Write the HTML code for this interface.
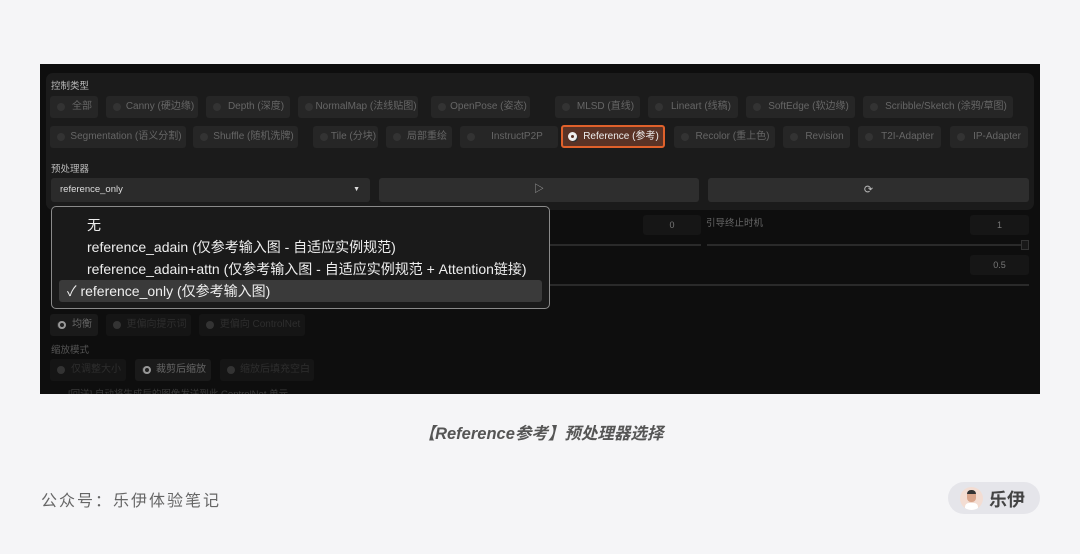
<!DOCTYPE html><html><head><meta charset="utf-8"><style>
*{margin:0;padding:0;box-sizing:border-box}
body{width:1080px;height:554px;background:#f5f5f7;position:relative;overflow:hidden;font-family:"Liberation Sans","Noto Sans CJK SC",sans-serif}
.a{position:absolute}
.shot{left:40px;top:64px;width:1000px;height:330px;background:#0e0e0e;overflow:hidden}
.panel{left:6px;top:9px;width:988px;height:137px;background:#1b1b1b;border-radius:7px}
.b{position:absolute;height:22px;background:#262626;border-radius:3px;color:#666;font-size:10px;line-height:22px;padding-left:16px;text-align:center;white-space:nowrap}
.b:before{content:"";position:absolute;left:7px;top:7px;width:8px;height:8px;border-radius:50%;background:#333}
.lbl{color:#bbb;font-size:9.5px}
.bx{position:absolute;background:#161616;color:#777;font-size:9px;text-align:center;line-height:20px;height:20px;border-radius:3px}
.ln{position:absolute;height:2px;background:#2a2a2a}
.m{position:absolute;left:35px;color:#eee;font-size:14px;white-space:nowrap}
</style></head><body>
<div class="a shot">
<div class="a panel"></div>
<div class="a lbl" style="left:11px;top:14px">控制类型</div>
<div class="b" style="left:10px;top:32px;width:48px">全部</div>
<div class="b" style="left:66px;top:32px;width:92px">Canny (硬边缘)</div>
<div class="b" style="left:166px;top:32px;width:84px">Depth (深度)</div>
<div class="b" style="left:258px;top:32px;width:120px">NormalMap (法线贴图)</div>
<div class="b" style="left:391px;top:32px;width:99px">OpenPose (姿态)</div>
<div class="b" style="left:515px;top:32px;width:85px">MLSD (直线)</div>
<div class="b" style="left:608px;top:32px;width:90px">Lineart (线稿)</div>
<div class="b" style="left:706px;top:32px;width:109px">SoftEdge (软边缘)</div>
<div class="b" style="left:823px;top:32px;width:150px">Scribble/Sketch (涂鸦/草图)</div>
<div class="b" style="left:10px;top:62px;width:136px">Segmentation (语义分割)</div>
<div class="b" style="left:153px;top:62px;width:105px">Shuffle (随机洗牌)</div>
<div class="b" style="left:273px;top:62px;width:65px">Tile (分块)</div>
<div class="b" style="left:346px;top:62px;width:66px">局部重绘</div>
<div class="b" style="left:420px;top:62px;width:98px">InstructP2P</div>
<div class="b" style="left:521px;top:61px;width:104px;height:23px;background:#5a3326;border:2px solid #e0612b;color:#eee;line-height:19px"><span style="position:absolute;left:5px;top:5px;width:9px;height:9px;border-radius:50%;background:#eee;border:2.5px solid #eee"></span><span style="position:absolute;left:8px;top:8px;width:3px;height:3px;border-radius:50%;background:#5a3326"></span><span>Reference (参考)</span></div>
<div class="b" style="left:634px;top:62px;width:101px">Recolor (重上色)</div>
<div class="b" style="left:743px;top:62px;width:67px">Revision</div>
<div class="b" style="left:818px;top:62px;width:83px">T2I-Adapter</div>
<div class="b" style="left:910px;top:62px;width:78px">IP-Adapter</div>
<div class="a lbl" style="left:11px;top:97px">预处理器</div>
<div class="a" style="left:11px;top:114px;width:319px;height:24px;background:#2b2b2b;border-radius:3px;color:#ddd;font-size:9.5px;line-height:24px;padding-left:9px">reference_only<span style="position:absolute;right:10px;font-size:7px">▼</span></div>
<div class="a" style="left:339px;top:114px;width:320px;height:24px;background:#2e2e2e;border-radius:3px;color:#aaa;text-align:center;line-height:24px;font-size:10px">▷</div>
<div class="a" style="left:668px;top:114px;width:321px;height:24px;background:#2e2e2e;border-radius:3px;color:#bbb;text-align:center;line-height:24px;font-size:11px">⟳</div>
<div class="bx" style="left:603px;top:151px;width:58px">0</div>
<div class="a" style="left:666px;top:151px;color:#666;font-size:9.5px">引导终止时机</div>
<div class="bx" style="left:930px;top:151px;width:59px">1</div>
<div class="ln" style="left:400px;top:180px;width:261px"></div>
<div class="ln" style="left:667px;top:180px;width:314px"></div>
<div class="a" style="left:981px;top:176px;width:8px;height:10px;border:1px solid #333;background:#181818"></div>
<div class="bx" style="left:930px;top:191px;width:59px">0.5</div>
<div class="ln" style="left:400px;top:220px;width:589px"></div>
<div class="b" style="left:10px;top:250px;width:48px;background:#1a1a1a;color:#666">均衡</div>
<div class="a" style="left:18px;top:257px;width:8px;height:8px;border-radius:50%;border:2px solid #999;background:#222"></div>
<div class="b" style="left:66px;top:250px;width:85px;background:#151515;color:#2e2e2e">更偏向提示词</div>
<div class="b" style="left:159px;top:250px;width:106px;background:#151515;color:#2e2e2e">更偏向 ControlNet</div>
<div class="a" style="left:11px;top:278px;color:#555;font-size:9.5px">缩放模式</div>
<div class="b" style="left:10px;top:295px;width:76px;background:#151515;color:#2e2e2e">仅调整大小</div>
<div class="b" style="left:95px;top:295px;width:76px;background:#1a1a1a;color:#666">裁剪后缩放</div>
<div class="a" style="left:103px;top:302px;width:8px;height:8px;border-radius:50%;border:2px solid #999;background:#222"></div>
<div class="b" style="left:180px;top:295px;width:94px;background:#151515;color:#2e2e2e">缩放后填充空白</div>
<div class="a" style="left:28px;top:322px;color:#3a3a3a;font-size:9.5px">[回送] 自动将生成后的图像发送到此 ControlNet 单元</div>
<div class="a" style="left:11px;top:142px;width:499px;height:103px;background:#1a1a1a;border:1px solid #8a8a8a;border-radius:5px">
<div class="a" style="left:7px;top:73px;width:483px;height:22px;background:#3a3a3a;border-radius:3px"></div>
<div class="m" style="top:8px">无</div>
<div class="m" style="top:30px">reference_adain (仅参考输入图 - 自适应实例规范)</div>
<div class="m" style="top:52px">reference_adain+attn (仅参考输入图 - 自适应实例规范 + Attention链接)</div>
<div class="m" style="top:74px;left:15px">✓ reference_only (仅参考输入图)</div>
</div>
</div>
<div class="a" style="left:0;width:1082px;top:420px;text-align:center;color:#555;font-size:16.5px;font-weight:bold;font-style:italic">【Reference参考】预处理器选择</div>
<div class="a" style="left:41px;top:487px;color:#666;font-size:16px;letter-spacing:2px">公众号：乐伊体验笔记</div>
<div class="a" style="left:948px;top:482px;width:92px;height:32px;border-radius:16px;background:#e5e5ea"></div>
<div class="a" style="left:960px;top:487px;width:23px;height:23px;border-radius:50%;background:#f3ddd3;overflow:hidden"><div class="a" style="left:7px;top:3px;width:9px;height:5px;border-radius:4px 4px 0 0;background:#333"></div><div class="a" style="left:7px;top:7px;width:9px;height:8px;border-radius:0 0 4px 4px;background:#d9a58b"></div><div class="a" style="left:5px;top:16px;width:13px;height:8px;background:#fff;border-radius:4px 4px 0 0"></div></div>
<div class="a" style="left:989px;top:486px;color:#444;font-size:18px;font-weight:bold">乐伊</div>
</body></html>
